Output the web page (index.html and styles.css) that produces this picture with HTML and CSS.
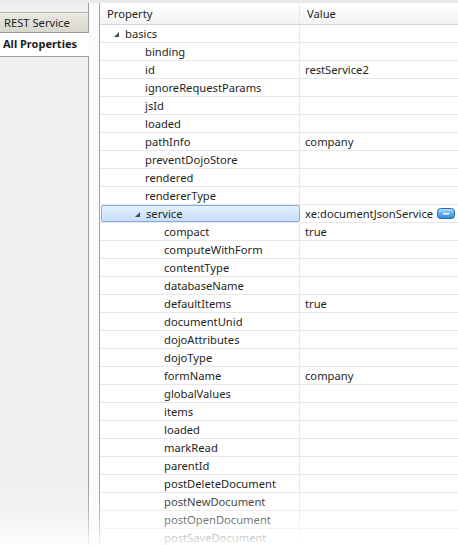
FILE: index.html
```html
<!DOCTYPE html>
<html>
<head>
<meta charset="utf-8">
<link rel="stylesheet" href="styles.css">
</head>
<body>
<div class="strip"></div>
<div class="main">
  <div class="side">
    <div class="tab">REST Service</div>
    <div class="tab active">All Properties</div>
  </div>
  <div class="gap"></div>
  <div class="grid">
    <div class="row head"><div class="c1">Property</div><div class="c2">Value</div></div>
    <div class="row"><div class="c1 l0"><span class="tri"></span>basics</div><div class="c2"></div></div>
    <div class="row"><div class="c1 l1">binding</div><div class="c2"></div></div>
    <div class="row"><div class="c1 l1">id</div><div class="c2">restService2</div></div>
    <div class="row"><div class="c1 l1">ignoreRequestParams</div><div class="c2"></div></div>
    <div class="row"><div class="c1 l1">jsId</div><div class="c2"></div></div>
    <div class="row"><div class="c1 l1">loaded</div><div class="c2"></div></div>
    <div class="row"><div class="c1 l1">pathInfo</div><div class="c2">company</div></div>
    <div class="row"><div class="c1 l1">preventDojoStore</div><div class="c2"></div></div>
    <div class="row"><div class="c1 l1">rendered</div><div class="c2"></div></div>
    <div class="row"><div class="c1 l1">rendererType</div><div class="c2"></div></div>
    <div class="row"><div class="c1 l1t sel"><span class="tri"></span>service</div><div class="c2 val">xe:documentJsonService<svg class="btn" width="18" height="11" viewBox="0 0 18 11"><defs><linearGradient id="g" x1="0" y1="0" x2="0" y2="1"><stop offset="0" stop-color="#bfe2ff"/><stop offset="0.5" stop-color="#5fb0f0"/><stop offset="1" stop-color="#2f86d8"/></linearGradient></defs><rect x="0.5" y="0.5" width="17" height="10" rx="3" fill="url(#g)" stroke="#2a6db8"/><rect x="6" y="5" width="6" height="1.5" fill="#fff"/></svg></div></div>
    <div class="row"><div class="c1 l2">compact</div><div class="c2">true</div></div>
    <div class="row"><div class="c1 l2">computeWithForm</div><div class="c2"></div></div>
    <div class="row"><div class="c1 l2">contentType</div><div class="c2"></div></div>
    <div class="row"><div class="c1 l2">databaseName</div><div class="c2"></div></div>
    <div class="row"><div class="c1 l2">defaultItems</div><div class="c2">true</div></div>
    <div class="row"><div class="c1 l2">documentUnid</div><div class="c2"></div></div>
    <div class="row"><div class="c1 l2">dojoAttributes</div><div class="c2"></div></div>
    <div class="row"><div class="c1 l2">dojoType</div><div class="c2"></div></div>
    <div class="row"><div class="c1 l2">formName</div><div class="c2">company</div></div>
    <div class="row"><div class="c1 l2">globalValues</div><div class="c2"></div></div>
    <div class="row"><div class="c1 l2">items</div><div class="c2"></div></div>
    <div class="row"><div class="c1 l2">loaded</div><div class="c2"></div></div>
    <div class="row"><div class="c1 l2">markRead</div><div class="c2"></div></div>
    <div class="row"><div class="c1 l2">parentId</div><div class="c2"></div></div>
    <div class="row"><div class="c1 l2">postDeleteDocument</div><div class="c2"></div></div>
    <div class="row"><div class="c1 l2">postNewDocument</div><div class="c2"></div></div>
    <div class="row"><div class="c1 l2">postOpenDocument</div><div class="c2"></div></div>
    <div class="row"><div class="c1 l2">postSaveDocument</div><div class="c2"></div></div>
  </div>
</div>
<div class="fade"></div>
</body>
</html>
```
FILE: styles.css
```css
html, body {
  margin: 0;
  padding: 0;
  height: 545px;
  overflow: hidden;
  background: #ffffff;
  font-family: "Noto Sans", "Open Sans", sans-serif;
  font-size: 11.2px;
  color: #1e1e1e;
}
.strip {
  height: 3px;
  background: #e9e9ee;
}
.main {
  display: flex;
  height: 542px;
  overflow: hidden;
}
.side {
  flex: none;
  width: 89px;
  box-sizing: border-box;
  border-right: 1px solid #a0a0a0;
  background: #f0f0f0;
  padding-top: 9px;
}
.tab {
  height: 21px;
  line-height: 20px;
  padding-left: 4px;
  box-sizing: border-box;
  border-top: 1px solid #b4b4ac;
  border-bottom: 1px solid #9c9c94;
  background: linear-gradient(#e9e9e2, #d8d8cf);
  white-space: nowrap;
  font-size: 11.2px;
}
.tab.active {
  height: 24px;
  line-height: 22px;
  padding-left: 3px;
  border-top: none;
  border-bottom: 1px solid #a0a0a0;
  background: #ffffff;
  font-weight: bold;
  margin-right: -1px;
  position: relative;
  font-size: 11px;
}
.gap {
  flex: none;
  width: 10px;
  background: #fbfbfb;
}
.grid {
  flex: 1;
  min-width: 0;
  border-left: 1px solid #a0a0a0;
  display: flex;
  flex-direction: column;
}
.row {
  flex: none;
  display: flex;
  height: 18px;
  box-sizing: border-box;
  border-bottom: 1px solid #e8e8e8;
  white-space: nowrap;
}
.row.head {
  height: 22px;
  border-bottom: 1px solid #d5d5d5;
  background: linear-gradient(#ffffff, #f2f3f5);
}
.c1 {
  width: 200px;
  flex: none;
  box-sizing: border-box;
  border-right: 1px solid #e8e8e8;
  display: flex;
  align-items: center;
}
.c2 {
  flex: 1;
  min-width: 0;
  display: flex;
  align-items: center;
  padding-left: 5px;
}
.head .c1 { padding-left: 7px; }
.head .c2 { padding-left: 7px; }
.l0 { padding-left: 14px; }
.l1 { padding-left: 45px; }
.l2 { padding-left: 64px; }
.tri {
  width: 0;
  height: 0;
  border-left: 5px solid transparent;
  border-bottom: 5px solid #4a4a4a;
  margin-right: 6px;
  margin-top: 2px;
}
.sel {
  margin-left: 1px;
  width: 199px;
  border: 1px solid #84acdd;
  border-radius: 2px;
  background: linear-gradient(#e3effd, #c7dffb);
  padding-left: 33px;
}
.val { padding-left: 5px; }
.btn { margin-left: 4px; margin-top: -1px; flex: none; }
.fade {
  position: absolute;
  left: 0;
  right: 0;
  bottom: 0;
  height: 60px;
  background: linear-gradient(rgba(255,255,255,0), rgba(255,255,255,0.25) 50%, rgba(255,255,255,0.92));
  pointer-events: none;
}
```
